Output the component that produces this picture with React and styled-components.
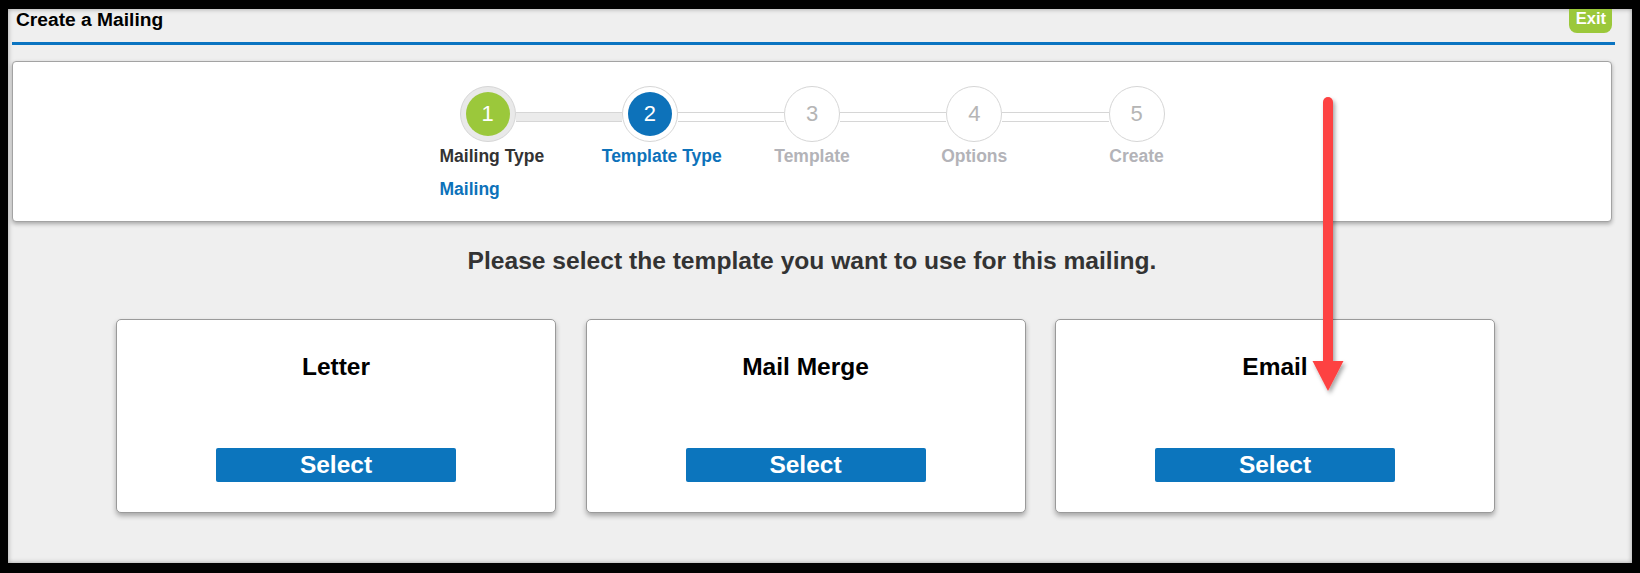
import React from 'react';
import styled, { createGlobalStyle } from 'styled-components';

const steps = [
  { n: 1, label: 'Mailing Type', state: 'done', sub: 'Mailing' },
  { n: 2, label: 'Template Type', state: 'active' },
  { n: 3, label: 'Template', state: 'pending' },
  { n: 4, label: 'Options', state: 'pending' },
  { n: 5, label: 'Create', state: 'pending' },
];

const templates = ['Letter', 'Mail Merge', 'Email'];

export default function App() {
  return (
    <>
      <GlobalStyle />
      <Frame>
        <Header>
          <Title>Create a Mailing</Title>
          <ExitButton>Exit</ExitButton>
        </Header>

        <StepCard>
          {steps.map((s, i) => (
            <React.Fragment key={s.n}>
              {i > 0 && <Connector $done={steps[i - 1].state === 'done'} />}
              <Step>
                <Circle $state={s.state}>
                  <Dot $state={s.state}>{s.n}</Dot>
                </Circle>
                <LabelBox>
                  <Label $state={s.state}>{s.label}</Label>
                  {s.sub && <SubLabel>{s.sub}</SubLabel>}
                </LabelBox>
              </Step>
            </React.Fragment>
          ))}
        </StepCard>

        <Prompt>Please select the template you want to use for this mailing.</Prompt>

        <Options>
          {templates.map(t => (
            <Card key={t}>
              <CardTitle>{t}</CardTitle>
              <SelectButton>Select</SelectButton>
            </Card>
          ))}
        </Options>

        <Arrow width="60" height="320" viewBox="0 0 60 320">
          <defs>
            <filter id="arrowShadow" x="-50%" y="-10%" width="200%" height="130%">
              <feDropShadow dx="2" dy="3" stdDeviation="2" floodColor="#000" floodOpacity="0.35" />
            </filter>
          </defs>
          <g filter="url(#arrowShadow)" fill="#fd4343" stroke="none">
            <line x1="28" y1="17" x2="28" y2="278" stroke="#fd4343" strokeWidth="10" strokeLinecap="round" />
            <polygon points="12.5,276 43.5,276 28,306" />
          </g>
        </Arrow>
      </Frame>
    </>
  );
}

const GlobalStyle = createGlobalStyle`
  html, body {
    margin: 0;
    padding: 0;
    background: #000;
  }
  body {
    font-family: "Liberation Sans", Arial, sans-serif;
  }
`;

const Frame = styled.div`
  position: relative;
  margin: 9px 8px 10px;
  height: 554px;
  background: #efefef;
  box-shadow: inset 0 0 5px rgba(0, 0, 0, 0.35);
  overflow: hidden;
`;

const Header = styled.header`
  display: flex;
  justify-content: space-between;
  align-items: flex-start;
  height: 33px;
  margin: 0 17px 0 4px;
  padding: 0 3px 0 4px;
  border-bottom: 3px solid #0b74c1;
`;

const Title = styled.h1`
  margin: 0;
  font-size: 19.2px;
  line-height: 22px;
  font-weight: bold;
  color: #000;
`;

const ExitButton = styled.button`
  height: 24px;
  padding: 0 6px 6px 7px;
  border: 0;
  border-radius: 0 0 8px 8px;
  background: #9bc83b;
  color: #fff;
  font-family: "Liberation Sans", Arial, sans-serif;
  font-size: 16.5px;
  line-height: 18px;
  font-weight: bold;
`;

const StepCard = styled.section`
  display: flex;
  justify-content: center;
  align-items: flex-start;
  margin: 16px 20px 0 4px;
  padding: 24px 0 22px;
  background: #fff;
  border: 1px solid #a3a3a3;
  border-radius: 4px;
  box-shadow: 0 2px 4px rgba(0, 0, 0, 0.3);
`;

const Step = styled.div`
  flex: none;
  display: flex;
  flex-direction: column;
  align-items: center;
  width: 56px;
`;

const Circle = styled.div`
  box-sizing: border-box;
  display: flex;
  align-items: center;
  justify-content: center;
  width: 56px;
  height: 56px;
  border-radius: 50%;
  border: 1px solid #d6d6d6;
  background: ${p => (p.$state === 'done' ? '#e9e9e9' : '#fff')};
`;

const dotColors = { done: '#9bc83b', active: '#0d72ba', pending: 'transparent' };

const Dot = styled.div`
  display: flex;
  align-items: center;
  justify-content: center;
  width: 44px;
  height: 44px;
  border-radius: 50%;
  background: ${p => dotColors[p.$state]};
  color: ${p => (p.$state === 'pending' ? '#b5b5b5' : '#fff')};
  font-size: 22px;
`;

const Connector = styled.div`
  flex: none;
  box-sizing: border-box;
  width: 106.25px;
  height: 10px;
  margin-top: 26px;
  border-top: 1px solid #d6d6d6;
  border-bottom: 1px solid #d6d6d6;
  background: ${p => (p.$done ? '#ebebeb' : '#fff')};
`;

const LabelBox = styled.div`
  flex: none;
  width: 96px;
  margin-top: 4px;
`;

const labelColors = { done: '#333', active: '#0d72ba', pending: '#b3b3b8' };

const Label = styled.div`
  text-align: center;
  white-space: nowrap;
  font-size: 17.5px;
  line-height: 20px;
  font-weight: bold;
  color: ${p => labelColors[p.$state]};
`;

const SubLabel = styled.div`
  margin-top: 13px;
  white-space: nowrap;
  font-size: 17.5px;
  line-height: 20px;
  font-weight: bold;
  color: #0d72ba;
`;

const Prompt = styled.p`
  margin: 25px 20px 0 4px;
  text-align: center;
  font-size: 24.6px;
  line-height: 28px;
  font-weight: bold;
  color: #333;
`;

const Options = styled.div`
  display: flex;
  gap: 29.5px;
  margin-top: 43.5px;
  padding-left: 108px;
`;

const Card = styled.div`
  box-sizing: border-box;
  display: flex;
  flex-direction: column;
  align-items: center;
  width: 440px;
  height: 194px;
  padding-top: 33px;
  background: #fff;
  border: 1px solid #9a9a9a;
  border-radius: 5px;
  box-shadow: 0 3px 5px rgba(0, 0, 0, 0.3);
`;

const CardTitle = styled.h2`
  margin: 0;
  font-size: 24.5px;
  line-height: 28px;
  font-weight: bold;
  color: #000;
`;

const SelectButton = styled.button`
  width: 240px;
  height: 34px;
  margin-top: 67px;
  padding: 0;
  border: 0;
  border-radius: 2px;
  background: #0c75bd;
  color: #fff;
  font-family: "Liberation Sans", Arial, sans-serif;
  font-size: 24.5px;
  line-height: 34px;
  font-weight: bold;
`;

const Arrow = styled.svg`
  position: absolute;
  left: 1292px;
  top: 76px;
  pointer-events: none;
`;
